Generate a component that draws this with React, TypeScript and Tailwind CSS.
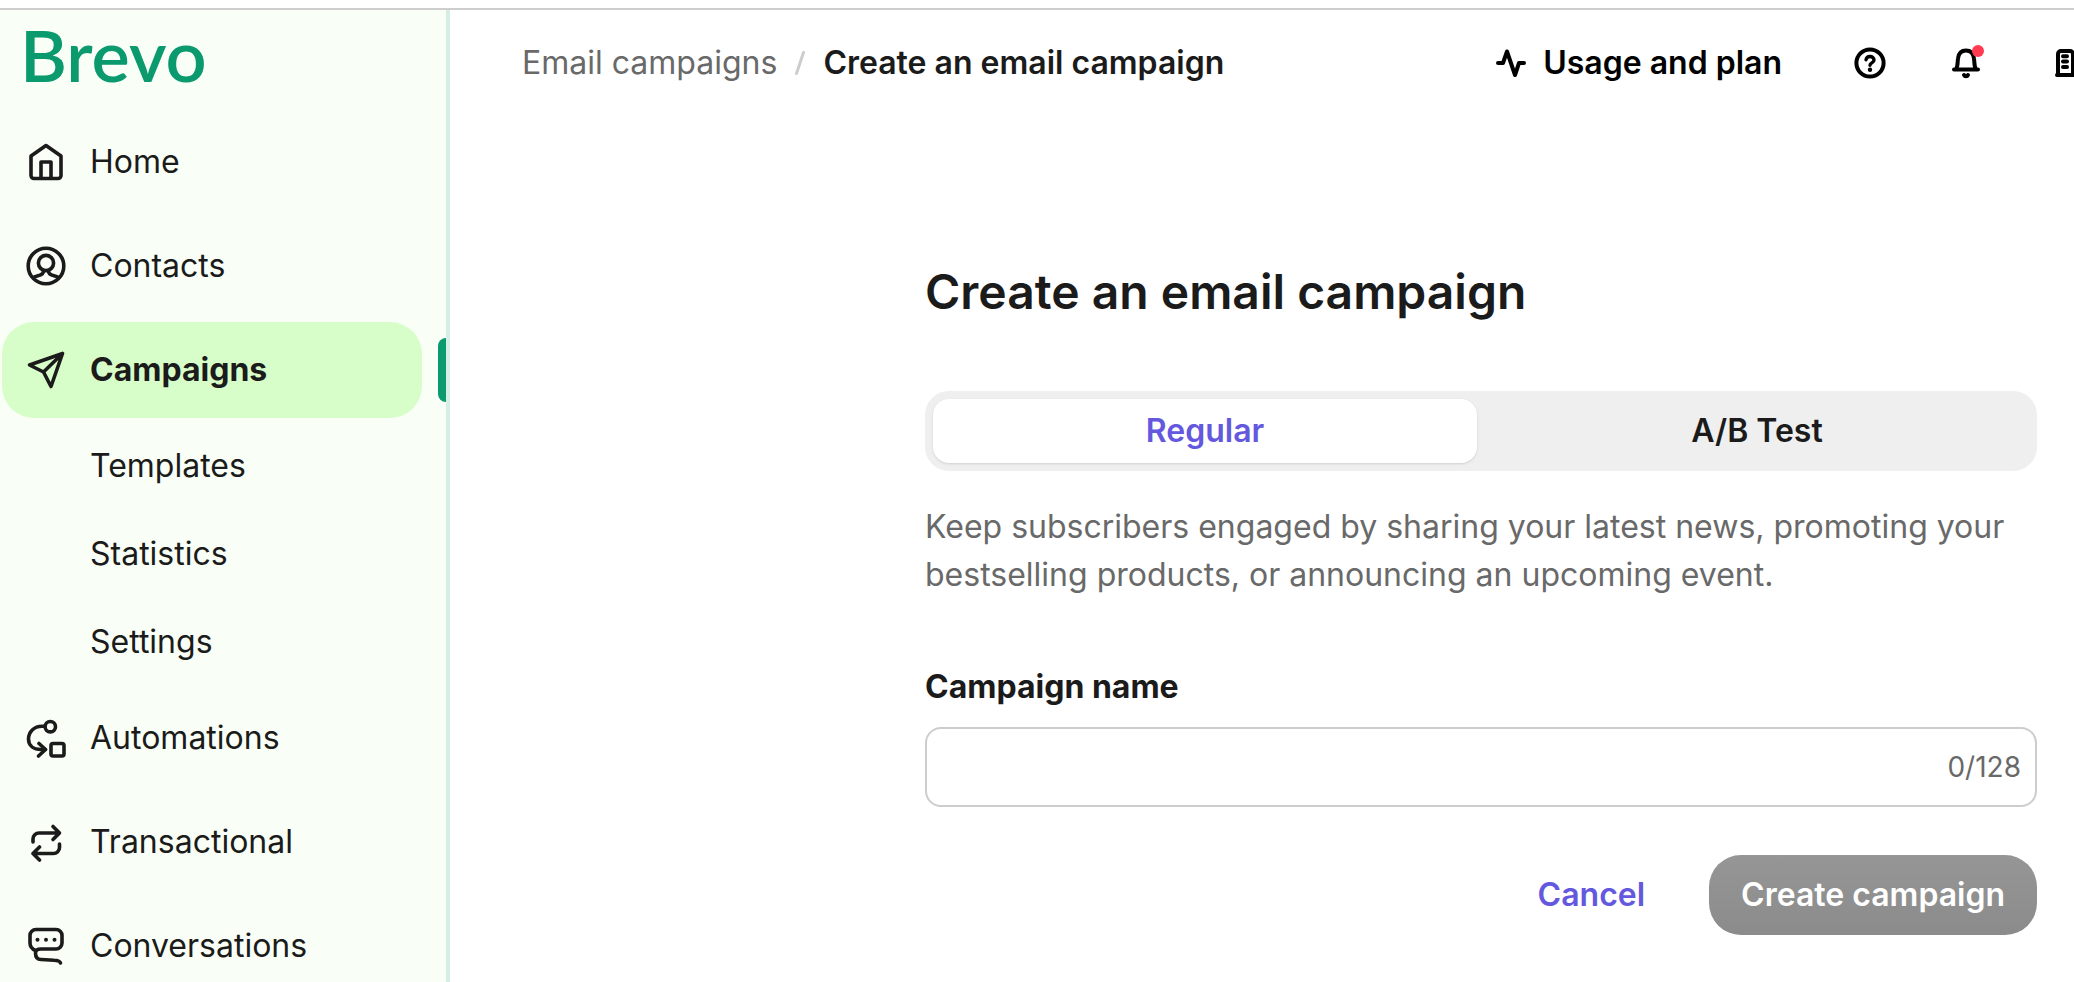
import React, { useState } from "react";

const stroke = {
  fill: "none",
  stroke: "currentColor",
  strokeWidth: 3.6,
  strokeLinecap: "round" as const,
  strokeLinejoin: "round" as const,
};

function NavIcon({ children }: { children: React.ReactNode }) {
  return (
    <svg viewBox="0 0 40 40" className="size-10 shrink-0" aria-hidden="true" {...stroke}>
      {children}
    </svg>
  );
}

function BarIcon({ children }: { children: React.ReactNode }) {
  return (
    <svg viewBox="0 0 32 32" className="size-8 shrink-0" aria-hidden="true" {...stroke} strokeWidth={4}>
      {children}
    </svg>
  );
}

const icons = {
  home: (
    <NavIcon>
      <path d="M5 14 20 3.5 35 14v19.5a3 3 0 0 1-3 3H8a3 3 0 0 1-3-3Z" />
      <path d="M15 36V20h10v16" />
    </NavIcon>
  ),
  contacts: (
    <NavIcon>
      <circle cx="20" cy="20" r="17.8" />
      <circle cx="20" cy="17" r="7.6" />
      <path d="M7.5 31.5c3.5-2.5 10-1 10-6.5M32.5 31.5c-3.5-2.5-10-1-10-6.5" />
    </NavIcon>
  ),
  campaigns: (
    <NavIcon>
      <path d="M36.5 3.5 3.5 15l14 7L25 36.5ZM17.5 22l19-18.5" />
    </NavIcon>
  ),
  automations: (
    <NavIcon>
      <circle cx="24.3" cy="8.7" r="5.2" />
      <path d="M19 8.2h-3C8 8.2 2.5 14 2.5 21S8 31.5 15 31.5h4.5" />
      <path d="m13 25.5 6.5 6-7 6.5" />
      <rect x="25" y="25.5" width="13" height="12.5" rx="2" />
    </NavIcon>
  ),
  transactional: (
    <NavIcon>
      <path d="M7 20v-3a6 6 0 0 1 6-6h20.5M27 4.5l6.5 6.5-6.5 6.5" />
      <path d="M33.5 22v3.5a6 6 0 0 1-6 6H7M13.5 25l-6.5 6.5 6.5 6.5" />
    </NavIcon>
  ),
  conversations: (
    <NavIcon>
      <path d="M9.5 24.5C6 23 4 21 4 17V9.5a6 6 0 0 1 6-6h20a6 6 0 0 1 6 6V17a6 6 0 0 1-6 6H15c-3.5 0-5.5 1-5.5 4 0 5 2 6.5 5.5 6.5l13 .7c4 .1 6 .8 6.5 2.8" />
      <g fill="currentColor" stroke="none">
        <circle cx="11.5" cy="13.7" r="2" />
        <circle cx="20" cy="13.7" r="2" />
        <circle cx="28.5" cy="13.7" r="2" />
      </g>
    </NavIcon>
  ),
};

const campaignPages = ["Templates", "Statistics", "Settings"];

function NavItem({ icon, label }: { icon: React.ReactNode; label: string }) {
  return (
    <a href="#" className="mr-6 ml-0.5 flex h-24 items-center gap-6 rounded-4xl px-6">
      {icon}
      {label}
    </a>
  );
}

function Sidebar() {
  return (
    <aside className="w-[450px] shrink-0 overflow-hidden border-r-4 border-[#d6efe6] bg-[#f9fff6] text-[#1b1b1b]">
      <a
        href="#"
        className="ml-5 flex h-[88px] items-center font-['Lato',sans-serif] text-[72px] leading-[88px] font-semibold text-[#0b996e]"
      >
        Brevo
      </a>
      <nav className="mt-4 flex flex-col gap-2">
        <NavItem icon={icons.home} label="Home" />
        <NavItem icon={icons.contacts} label="Contacts" />
        <div>
          <div className="flex items-center gap-4 pl-0.5">
            <a
              href="#"
              aria-current="page"
              className="flex h-24 flex-1 items-center gap-6 rounded-4xl bg-[#d7fec8] px-6 font-bold"
            >
              {icons.campaigns}
              Campaigns
            </a>
            <span className="h-16 w-2 rounded-l-lg bg-[#0b996e]"></span>
          </div>
          <ul className="mt-1 -mb-1">
            {campaignPages.map((page) => (
              <li key={page}>
                <a href="#" className="flex h-[88px] items-center pl-[90px]">
                  {page}
                </a>
              </li>
            ))}
          </ul>
        </div>
        <NavItem icon={icons.automations} label="Automations" />
        <NavItem icon={icons.transactional} label="Transactional" />
        <NavItem icon={icons.conversations} label="Conversations" />
      </nav>
    </aside>
  );
}

function Header() {
  return (
    <header className="flex h-[106px] items-center justify-between pl-[72px] whitespace-nowrap">
      <nav aria-label="Breadcrumb" className="flex items-center gap-[18px]">
        <a href="#" className="text-[#696969]">
          Email campaigns
        </a>
        <svg viewBox="0 0 10 24" className="h-6 w-2.5" aria-hidden="true">
          <path d="M8.5 1.5 1.5 22.5" stroke="#cdcdcd" strokeWidth="3" strokeLinecap="round" />
        </svg>
        <span className="font-semibold text-[#1b1b1b]">Create an email campaign</span>
      </nav>

      <div className="-mr-3 flex items-center gap-[72px] text-black">
        <button className="flex items-center gap-4 font-semibold">
          <BarIcon>
            <path d="M3 16h5l4-11.5L20 28l4-12h5" />
          </BarIcon>
          Usage and plan
        </button>
        <div className="flex gap-16">
          <button aria-label="Help">
            <BarIcon>
              <circle cx="16" cy="16" r="13.6" />
              <path d="M12 12.8a4 4 0 0 1 4-3.3c2.3 0 4 1.5 4 3.5 0 3-4 2.8-4 5.3" strokeWidth={3.4} />
              <circle cx="16" cy="22.8" r="2.2" fill="currentColor" stroke="none" />
            </BarIcon>
          </button>
          <button aria-label="Notifications" className="relative">
            <BarIcon>
              <path d="M4 22.5h24M6 22.5C8 19 7.5 14.5 8 11.5c.6-5 3.5-8 8-8s7.4 3 8 8c.5 3 0 7.5 2 11" />
              <path d="M14 28c.8 1.5 3.2 1.5 4 0" />
            </BarIcon>
            <span className="absolute -top-0.5 -right-0.5 size-3 rounded-full bg-[#ff3b52]"></span>
          </button>
        </div>
        <button aria-label="Organization">
          <BarIcon>
            <path d="M3 28h26M4 28V7a3 3 0 0 1 3-3h9a3 3 0 0 1 3 3v21M19 13h6a3 3 0 0 1 3 3v12" />
            <path d="M9 9.2h4M9 14.6h4M9 20h4" />
          </BarIcon>
        </button>
      </div>
    </header>
  );
}

function CampaignForm() {
  const [name, setName] = useState("");

  return (
    <form className="mt-[147px] mr-[37px] ml-auto w-full max-w-[1112px]">
      <h1 className="text-5xl leading-[58px] font-semibold text-[#1b1b1b]">Create an email campaign</h1>

      <div role="tablist" className="mt-[70px] flex gap-2 rounded-3xl bg-[#efefef] p-2 font-semibold">
        <button
          type="button"
          role="tab"
          aria-selected="true"
          className="h-16 flex-1 rounded-2xl bg-white text-[#6358de] shadow-sm"
        >
          Regular
        </button>
        <button type="button" role="tab" aria-selected="false" className="h-16 flex-1 rounded-2xl text-[#1b1b1b]">
          A/B Test
        </button>
      </div>

      <p className="mt-8 text-[#696969]">
        Keep subscribers engaged by sharing your latest news, promoting your bestselling products, or announcing an
        upcoming event.
      </p>

      <label htmlFor="campaign-name" className="mt-16 block font-bold text-[#1b1b1b]">
        Campaign name
      </label>
      <div className="mt-4 flex h-20 items-center rounded-2xl border-2 border-[#cdcdcd] bg-white px-3.5">
        <input
          id="campaign-name"
          type="text"
          maxLength={128}
          value={name}
          onChange={(e) => setName(e.target.value)}
          className="h-full min-w-0 flex-1 outline-none"
        />
        <span className="text-[28px] text-[#696969]">{name.length}/128</span>
      </div>

      <div className="mt-12 flex items-center justify-end gap-8 font-semibold">
        <button type="button" className="h-20 px-8 text-[#6358de]">
          Cancel
        </button>
        <button
          type="submit"
          disabled
          className="h-20 rounded-4xl bg-linear-to-b from-[#969696] to-[#8b8b8b] px-8 text-white"
        >
          Create campaign
        </button>
      </div>
    </form>
  );
}

export default function App() {
  return (
    <div className="flex h-screen flex-col overflow-hidden bg-white pt-2 font-['Inter',sans-serif] text-[32px] leading-[48px]">
      <div className="flex min-h-0 flex-1 border-t-2 border-[#cdcdcd]">
        <Sidebar />
        <main className="min-w-0 flex-1 overflow-hidden">
          <Header />
          <CampaignForm />
        </main>
      </div>
    </div>
  );
}
